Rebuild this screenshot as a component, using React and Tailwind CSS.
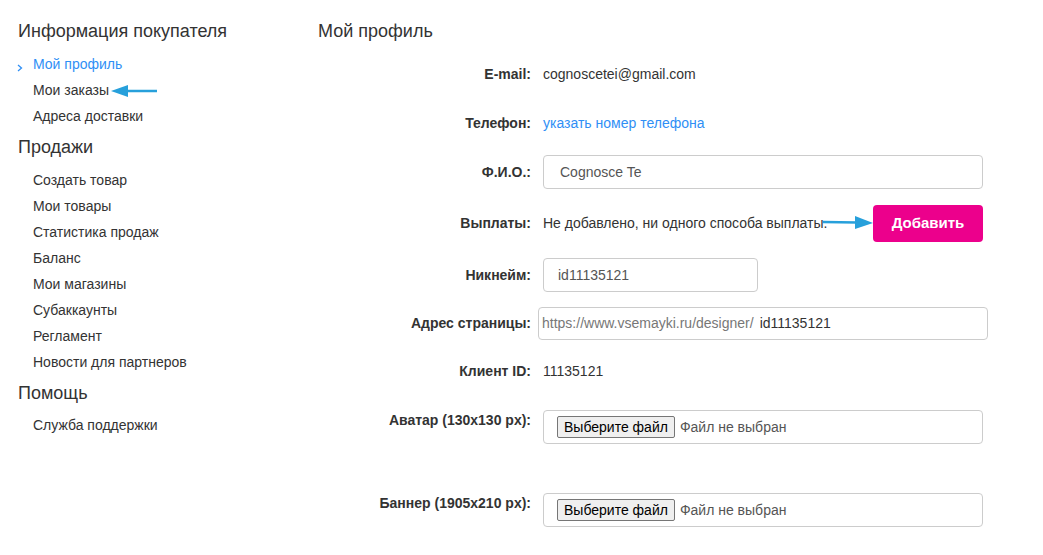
import React from "react";

const font = { fontFamily: '"Liberation Sans", Arial, sans-serif' };

function SideItem({ children, active }) {
  return (
    <div className={`relative h-[26px] leading-[26px] pl-[15px] text-[14px] ${active ? "text-[#2f8ff5]" : "text-[#333]"}`}>
      {active && (
        <svg width="6" height="8" viewBox="0 0 6 8" className="absolute left-[-1px] top-[13px]">
          <polyline points="1,1 4.5,4 1,7" fill="none" stroke="#2f8ff5" strokeWidth="1.3" />
        </svg>
      )}
      {children}
    </div>
  );
}

function ArrowLeft() {
  return (
    <svg width="48" height="14" viewBox="0 0 48 14" className="inline-block align-middle ml-[2px]">
      <line x1="14" y1="7" x2="46" y2="7" stroke="#27a0db" strokeWidth="2.5" />
      <polygon points="0,7 17,1 17,13" fill="#27a0db" />
    </svg>
  );
}

function ArrowRight() {
  return (
    <svg width="50" height="14" viewBox="0 0 50 14">
      <line x1="0" y1="7" x2="34" y2="7.5" stroke="#27a0db" strokeWidth="2.5" />
      <polygon points="50,8 32,1 32,14" fill="#27a0db" />
    </svg>
  );
}

function Label({ children, top }) {
  return (
    <div className={`w-[213px] shrink-0 text-right font-bold text-[14px] text-[#333] ${top ? "leading-[20px] self-start" : ""}`}>
      {children}
    </div>
  );
}

function FileBox() {
  return (
    <div className="ml-[12px] w-[440px] h-[34px] border border-[#ccc] rounded-[4px] flex items-center pl-[13px]">
      <span className="h-[22px] px-[6px] border border-[#767676] bg-[#efefef] rounded-[2px] text-[14px] text-black leading-[20px]">
        Выберите файл
      </span>
      <span className="ml-[5px] text-[14px] text-[#555]">Файл не выбран</span>
    </div>
  );
}

export default function App() {
  return (
    <div style={font} className="w-[1043px] h-[555px] bg-white flex overflow-hidden">
      <div className="ml-[18px] w-[300px] pt-[20px] shrink-0">
        <div className="h-[22px] leading-[22px] text-[18px] text-[#333]">Информация покупателя</div>
        <div className="mt-[9px]">
          <SideItem active>Мой профиль</SideItem>
          <SideItem>
            Мои заказы
            <ArrowLeft />
          </SideItem>
          <SideItem>Адреса доставки</SideItem>
        </div>
        <div className="mt-[7px] h-[22px] leading-[22px] text-[18px] text-[#333]">Продажи</div>
        <div className="mt-[9px]">
          <SideItem>Создать товар</SideItem>
          <SideItem>Мои товары</SideItem>
          <SideItem>Статистика продаж</SideItem>
          <SideItem>Баланс</SideItem>
          <SideItem>Мои магазины</SideItem>
          <SideItem>Субаккаунты</SideItem>
          <SideItem>Регламент</SideItem>
          <SideItem>Новости для партнеров</SideItem>
        </div>
        <div className="mt-[7px] h-[22px] leading-[22px] text-[18px] text-[#333]">Помощь</div>
        <div className="mt-[8px]">
          <SideItem>Служба поддержки</SideItem>
        </div>
      </div>

      <div className="flex-1 pt-[20px]">
        <div className="h-[22px] leading-[22px] text-[18px] text-[#333]">Мой профиль</div>

        <div className="mt-[15px] h-[34px] flex items-center">
          <Label>E-mail:</Label>
          <span className="ml-[12px] text-[14px] text-[#333]">cognoscetei@gmail.com</span>
        </div>

        <div className="mt-[15px] h-[34px] flex items-center">
          <Label>Телефон:</Label>
          <span className="ml-[12px] text-[14px] text-[#2f8ff5]">указать номер телефона</span>
        </div>

        <div className="mt-[15px] h-[34px] flex items-center">
          <Label>Ф.И.О.:</Label>
          <div className="ml-[12px] w-[440px] h-[34px] border border-[#ccc] rounded-[4px] flex items-center pl-[16px] text-[14px] text-[#555]">
            Cognosce Te
          </div>
        </div>

        <div className="mt-[16px] h-[37px] flex items-center relative">
          <Label>Выплаты:</Label>
          <span className="ml-[12px] text-[14px] text-[#333]">Не добавлено, ни одного способа выплаты.</span>
          <div className="absolute left-[505px] top-[10px]">
            <ArrowRight />
          </div>
          <div className="ml-auto mr-[60px] w-[110px] h-[37px] rounded-[4px] bg-[#ec008c] text-white font-bold text-[15px] flex items-center justify-center">
            Добавить
          </div>
        </div>

        <div className="mt-[16px] h-[34px] flex items-center">
          <Label>Никнейм:</Label>
          <div className="ml-[12px] w-[215px] h-[34px] border border-[#ccc] rounded-[4px] flex items-center pl-[14px] text-[14px] text-[#555]">
            id11135121
          </div>
        </div>

        <div className="mt-[15px] h-[33px] flex items-center">
          <Label>Адрес страницы:</Label>
          <div className="ml-[7px] w-[450px] h-[33px] border border-[#ccc] rounded-[4px] flex items-center pl-[3px] text-[14px]">
            <span className="text-[#777]">https://www.vsemayki.ru/designer/</span>
            <span className="ml-[6px] text-[#333]">id11135121</span>
          </div>
        </div>

        <div className="mt-[14px] h-[34px] flex items-center">
          <Label>Клиент ID:</Label>
          <span className="ml-[12px] text-[14px] text-[#333]">11135121</span>
        </div>

        <div className="mt-[22px] h-[34px] flex">
          <Label top>Аватар (130x130 px):</Label>
          <FileBox />
        </div>

        <div className="mt-[49px] h-[34px] flex">
          <Label top>Баннер (1905x210 px):</Label>
          <FileBox />
        </div>
      </div>
    </div>
  );
}
